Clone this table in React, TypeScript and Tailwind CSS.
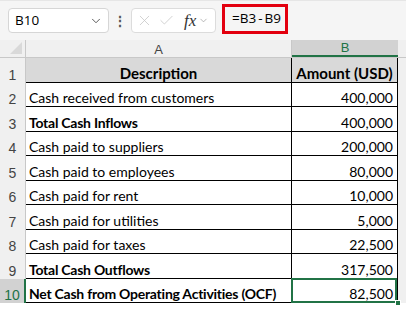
import { ChevronDown, X, Check } from "lucide-react";

type Row = { label: string; amount: string; bold?: boolean };

const rows: Row[] = [
  { label: "Cash received from customers", amount: "400,000" },
  { label: "Total Cash Inflows", amount: "400,000", bold: true },
  { label: "Cash paid to suppliers", amount: "200,000" },
  { label: "Cash paid to employees", amount: "80,000" },
  { label: "Cash paid for rent", amount: "10,000" },
  { label: "Cash paid for utilities", amount: "5,000" },
  { label: "Cash paid for taxes", amount: "22,500" },
  { label: "Total Cash Outflows", amount: "317,500", bold: true },
  { label: "Net Cash from Operating Activities (OCF)", amount: "82,500", bold: true },
];

const cell = "font-['Lato',sans-serif] text-[14px] leading-[16px] text-black whitespace-nowrap";
const bold = "font-bold tracking-[-0.25px]";
const title = "font-['Lato',sans-serif] font-bold text-[15px] leading-[17px] text-black whitespace-nowrap";
const head = "font-['Liberation_Sans',sans-serif] text-[14px] leading-[16px]";

function FormulaBar() {
  return (
    <div className="h-[40px] flex items-center bg-[#f5f5f5] border-t border-[#e6e6e6]">
      <div className="ml-[8px] w-[101px] h-[25px] bg-white border border-[#d6d6d6] rounded-[4px] flex items-center justify-between pl-[6px] pr-[5px]">
        <span className="font-['Open_Sans',sans-serif] text-[13.5px] text-black">B10</span>
        <ChevronDown size={14} strokeWidth={1.5} className="text-[#444]" />
      </div>
      <span className="w-[22px] text-center text-[#555] text-[14px] leading-none font-bold">⋮</span>
      <div className="w-[85px] h-[25px] bg-white border border-[#dcdcdc] rounded-[4px] flex items-center pl-[4px]">
        <X size={17} strokeWidth={1.1} className="text-[#c6c6c6]" />
        <Check size={17} strokeWidth={1.1} className="text-[#c6c6c6] ml-[5px]" />
        <span className="font-['Liberation_Serif',serif] italic text-[17px] text-[#333] ml-[9px] leading-none">fx</span>
        <ChevronDown size={11} strokeWidth={1.5} className="text-[#999] ml-[2px]" />
      </div>
      <div className="ml-[6px] mt-[-4px] w-[66px] h-[30px] border-[3px] border-[#e3000f] flex items-center pl-[7px]">
        <span className="font-['Open_Sans',sans-serif] text-[13.5px] text-black">
          =B3<span className="mx-[2px]">-</span>B9
        </span>
      </div>
    </div>
  );
}

export default function App() {
  return (
    <div className="w-[406px] h-[309px] overflow-hidden bg-white">
      <FormulaBar />
      {/* column headers */}
      <div className="flex h-[18px] bg-[#f0f0f0] border-b border-[#c8c8c8]">
        <div className="w-[26px] border-r border-[#c8c8c8] relative">
          <div className="absolute right-[3px] bottom-[3px] w-0 h-0 border-l-[12px] border-l-transparent border-b-[12px] border-b-[#d9d9d9]" />
        </div>
        <div className="w-[266px] border-r border-[#c8c8c8] flex items-end justify-center font-['Liberation_Sans',sans-serif] text-[13px] leading-[15px] text-[#444]">
          A
        </div>
        <div className="w-[106px] bg-[#d2d2d2] border-b-2 border-[#217346] flex items-end justify-center font-['Liberation_Sans',sans-serif] text-[13px] leading-[15px] text-[#217346]">
          B
        </div>
        <div className="flex-1" />
      </div>
      {/* row 1 */}
      <div className="flex h-[25px]">
        <div className={`w-[26px] bg-[#f0f0f0] border-r border-[#c8c8c8] flex items-end justify-center text-[#444] ${head}`}>
          1
        </div>
        <div className={`w-[266px] bg-[#d9d9d9] border-b border-r border-black flex items-end justify-center ${title}`}>
          Description
        </div>
        <div className={`w-[106px] bg-[#d9d9d9] border-b border-r border-black flex items-end justify-center ${title}`}>
          Amount (USD)
        </div>
        <div className="flex-1 bg-[#f0f0f0]" />
      </div>
      {rows.map((r, i) => {
        const n = i + 2;
        const sel = n === 10;
        const h = i % 2 === 0 ? "h-[24px]" : "h-[25px]";
        return (
          <div key={n} className={`flex ${h}`}>
            <div
              className={`w-[26px] flex items-end justify-center ${head} ${
                sel
                  ? "bg-[#d2d2d2] border-r-2 border-[#217346] text-[#217346]"
                  : "bg-[#f0f0f0] border-r border-[#c8c8c8] text-[#444]"
              }`}
            >
              {n}
            </div>
            <div className={`w-[266px] border-b border-r border-black flex items-end pl-[3px] ${r.bold ? bold : ""} ${cell}`}>
              {r.label}
            </div>
            <div
              className={`w-[106px] relative border-b border-r border-black flex items-end justify-end pr-[4px] ${cell}`}
            >
              {r.amount}
              {sel && (
                <>
                  <div className="absolute -left-[1px] -top-[1px] w-[106px] h-[25px] border-2 border-[#217346]" />
                  <div className="absolute -right-[4px] -bottom-[4px] w-[6px] h-[6px] bg-[#217346] border border-white" />
                </>
              )}
            </div>
            <div className="flex-1 bg-[#f0f0f0]" />
          </div>
        );
      })}
    </div>
  );
}
